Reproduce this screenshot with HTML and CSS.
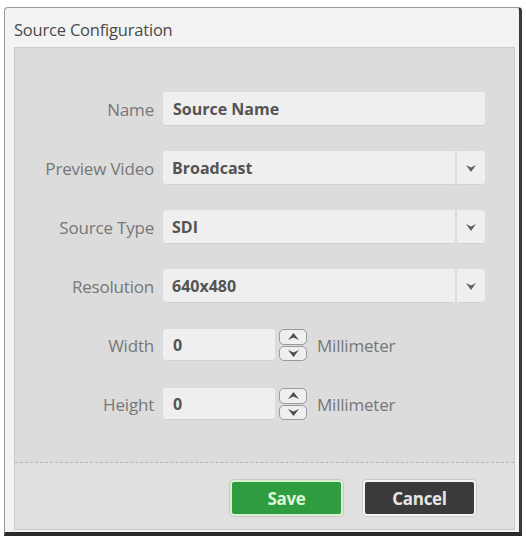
FILE: index.html
```html
<!DOCTYPE html>
<html lang="en">
<head>
  <meta charset="UTF-8">
  <meta name="viewport" content="width=device-width, initial-scale=1.0">
  <title>Source Configuration</title>
  <link rel="stylesheet" href="styles.css">
</head>
<body>
  <div class="window">
    <div class="title">Source Configuration</div>
    <div class="panel">
      <form class="config-form">
        <div class="row">
          <label class="label">Name</label>
          <div class="field text-field">Source Name</div>
        </div>
        <div class="row">
          <label class="label">Preview Video</label>
          <div class="field select-field">
            <span class="value">Broadcast</span>
            <span class="arrow"><svg width="10" height="7" viewBox="0 0 10 7"><path d="M0 0 L5 7 L10 0 L5 2.5 Z" fill="#5e5e5e"/></svg></span>
          </div>
        </div>
        <div class="row">
          <label class="label">Source Type</label>
          <div class="field select-field">
            <span class="value">SDI</span>
            <span class="arrow"><svg width="10" height="7" viewBox="0 0 10 7"><path d="M0 0 L5 7 L10 0 L5 2.5 Z" fill="#5e5e5e"/></svg></span>
          </div>
        </div>
        <div class="row">
          <label class="label">Resolution</label>
          <div class="field select-field">
            <span class="value">640x480</span>
            <span class="arrow"><svg width="10" height="7" viewBox="0 0 10 7"><path d="M0 0 L5 7 L10 0 L5 2.5 Z" fill="#5e5e5e"/></svg></span>
          </div>
        </div>
        <div class="row">
          <label class="label">Width</label>
          <div class="field num-field">0</div>
          <div class="spinner">
            <span class="spin up"><svg width="11" height="7" viewBox="0 0 11 7"><path d="M0 7 L5.5 0 L11 7 L5.5 4.5 Z" fill="#4e4e4e"/></svg></span>
            <span class="spin down"><svg width="11" height="7" viewBox="0 0 11 7"><path d="M0 0 L5.5 7 L11 0 L5.5 2.5 Z" fill="#4e4e4e"/></svg></span>
          </div>
          <span class="unit">Millimeter</span>
        </div>
        <div class="row">
          <label class="label">Height</label>
          <div class="field num-field">0</div>
          <div class="spinner">
            <span class="spin up"><svg width="11" height="7" viewBox="0 0 11 7"><path d="M0 7 L5.5 0 L11 7 L5.5 4.5 Z" fill="#4e4e4e"/></svg></span>
            <span class="spin down"><svg width="11" height="7" viewBox="0 0 11 7"><path d="M0 0 L5.5 7 L11 0 L5.5 2.5 Z" fill="#4e4e4e"/></svg></span>
          </div>
          <span class="unit">Millimeter</span>
        </div>
      </form>
      <div class="footer">
        <button class="btn btn-save" type="button">Save</button>
        <button class="btn btn-cancel" type="button">Cancel</button>
      </div>
    </div>
  </div>
</body>
</html>
```

FILE: styles.css
```css
body {
  margin: 0;
  background-color: #ffffff;
  font-family: "Open Sans", "Noto Sans", sans-serif;
}

.window {
  margin: 7px 0 0 4px;
  width: 514px;
  height: 524px;
  background-color: #f3f3f3;
  border: 1px solid #9a9a9a;
  border-right: 3px solid #3a3a3a;
  border-bottom: 4px solid #2a2a2a;
  border-radius: 4px 4px 0 0;
  display: flex;
  flex-direction: column;
}

.title {
  height: 39px;
  padding-left: 9px;
  font-size: 16.5px;
  line-height: 44px;
  color: #4a4a4a;
  flex-shrink: 0;
  letter-spacing: -0.2px;
}

.panel {
  margin: 0 4px 2px 9px;
  flex: 1;
  background-color: #dcdcdc;
  border: 1px solid #c9c9c9;
  display: flex;
  flex-direction: column;
}

.config-form {
  flex: 1;
  padding-top: 44px;
  display: flex;
  flex-direction: column;
  gap: 25px;
}

.row {
  display: flex;
  align-items: center;
  height: 34px;
}

.label {
  width: 139px;
  text-align: right;
  padding-right: 9px;
  font-size: 17px;
  color: #777;
  flex-shrink: 0;
  letter-spacing: -0.2px;
}

.field {
  height: 34px;
  background-color: #efefef;
  border-radius: 3px;
  box-shadow: inset 0 -1px 0 #d2d2d2;
  font-size: 16px;
  font-weight: 700;
  color: #545454;
  display: flex;
  align-items: center;
  box-sizing: border-box;
}

.text-field {
  width: 322px;
  padding-left: 10px;
}

.select-field {
  width: 322px;
}

.select-field .value {
  flex: 1;
  height: 100%;
  display: flex;
  align-items: center;
  padding-left: 9px;
  border-right: 2px solid #dcdcdc;
}

.select-field .arrow {
  width: 28px;
  display: flex;
  justify-content: center;
}

.num-field {
  width: 112px;
  height: 32px;
  padding-left: 10px;
}

.spinner {
  margin-left: 4px;
  width: 28px;
  height: 32px;
  display: flex;
  flex-direction: column;
  gap: 1px;
}

.spin {
  flex: 1;
  display: flex;
  align-items: center;
  justify-content: center;
  background-color: #efefef;
  border: 1.5px solid #999;
  border-radius: 5px;
}

.unit {
  margin-left: 10px;
  font-size: 17px;
  color: #777;
  letter-spacing: -0.2px;
}

.footer {
  height: 67px;
  box-sizing: border-box;
  flex-shrink: 0;
  border-top: 1px dashed #b5b5b5;
  background-color: #e0e0e0;
  display: flex;
  justify-content: flex-end;
  align-items: flex-start;
  padding: 17px 38px 0 0;
  gap: 20px;
}

.btn {
  width: 113px;
  height: 36px;
  border-radius: 4px;
  border: 2px solid #f4f4f4;
  font-family: "Open Sans", "Noto Sans", sans-serif;
  font-size: 17px;
  font-weight: 700;
  color: #e6e6e6;
  box-shadow: 0 0 0 1px #c8c8c8;
  letter-spacing: -0.3px;
}

.btn-save {
  background-color: #2f9c3f;
  border-color: #d8f0d0;
  color: #dff5d8;
}

.btn-cancel {
  background-color: #3a3a3a;
}
```
